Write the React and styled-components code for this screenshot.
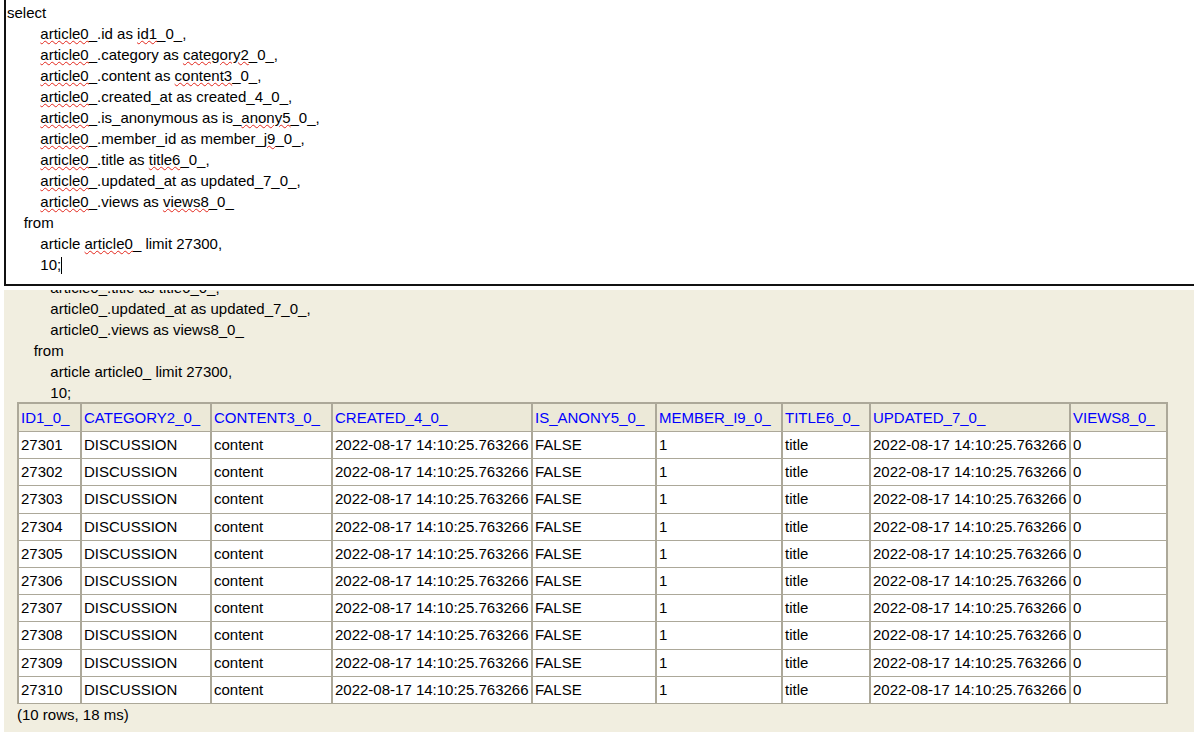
import React from "react";
import styled, { createGlobalStyle } from "styled-components";

const GlobalStyle = createGlobalStyle`
  html, body {
    margin: 0;
    padding: 0;
    overflow: hidden;
    background: #ffffff;
  }
  body {
    font-family: "Liberation Sans", Arial, sans-serif;
    font-size: 15px;
    color: #000;
  }
`;

const Page = styled.div`
  height: 100vh;
  padding-left: 4px;
  display: flex;
  flex-direction: column;
  overflow: hidden;
`;

const Editor = styled.div`
  box-sizing: border-box;
  flex: none;
  height: 288px;
  margin-top: -2px;
  margin-right: -12px;
  border: 2px solid #111;
  background: #fff;
  padding: 2px 1px 0 1px;
  white-space: pre;
  line-height: 21px;
  font-size: 15px;
  overflow: hidden;
`;

const Line = styled.div`
  height: 21px;
`;

const Miss = styled.span`
  text-decoration-line: underline;
  text-decoration-style: wavy;
  text-decoration-color: #e3261b;
  text-decoration-thickness: 1px;
  text-underline-offset: 1px;
`;

const Caret = styled.span`
  display: inline-block;
  width: 1px;
  height: 17px;
  background: #000;
  vertical-align: -4px;
`;

const Results = styled.div`
  flex: 1;
  margin-top: 4px;
  background: #f1eee0;
  padding-left: 13px;
  overflow: hidden;
`;

const ScrolledSql = styled.div`
  margin-top: -160px;
  white-space: pre;
  line-height: 21px;
`;

const ResultTable = styled.table`
  margin-top: -1px;
  border-collapse: collapse;
  table-layout: fixed;
  width: 1149px;
  background: #fff;
  font-size: 15px;
`;

const Th = styled.th`
  background: #ece9d8;
  color: #0000ff;
  font-weight: normal;
  text-align: left;
  padding: 4px 2px;
  line-height: 19px;
  border-style: solid;
  border-color: #aca899;
  border-width: 2px 2px 1px 2px;
  white-space: nowrap;
  overflow: hidden;
`;

const Td = styled.td`
  padding: 4px 2px;
  line-height: 18.2px;
  border-style: solid;
  border-color: #aca899;
  border-width: 1px 2px;
  white-space: nowrap;
  overflow: hidden;
`;

const Summary = styled.div`
  margin-top: 0px;
  line-height: 21px;
`;

const I8 = "        ";
const I4 = "    ";

const editorLines = [
  ["select"],
  [I8, { m: "article0" }, "_.id as ", { m: "id1" }, "_0_,"],
  [I8, { m: "article0" }, "_.category as ", { m: "category2" }, "_0_,"],
  [I8, { m: "article0" }, "_.content as ", { m: "content3" }, "_0_,"],
  [I8, { m: "article0" }, "_.created_at as created_4_0_,"],
  [I8, { m: "article0" }, "_.is_anonymous as is_", { m: "anony5" }, "_0_,"],
  [I8, { m: "article0" }, "_.member_id as member_", { m: "j9" }, "_0_,"],
  [I8, { m: "article0" }, "_.title as ", { m: "title6" }, "_0_,"],
  [I8, { m: "article0" }, "_.updated_at as updated_7_0_,"],
  [I8, { m: "article0" }, "_.views as ", { m: "views8" }, "_0_"],
  [I4, "from"],
  [I8, "article ", { m: "article0" }, "_ limit 27300,"],
  [I8, "10;", { caret: true }],
];

const plainLines = editorLines.map((segs) =>
  segs
    .filter((s) => typeof s === "string" || s.m)
    .map((s) => (typeof s === "string" ? s : s.m))
    .join("")
);

const columns = [
  { name: "ID1_0_", w: 63 },
  { name: "CATEGORY2_0_", w: 130 },
  { name: "CONTENT3_0_", w: 121 },
  { name: "CREATED_4_0_", w: 200 },
  { name: "IS_ANONY5_0_", w: 124 },
  { name: "MEMBER_I9_0_", w: 126 },
  { name: "TITLE6_0_", w: 88 },
  { name: "UPDATED_7_0_", w: 200 },
  { name: "VIEWS8_0_", w: 97 },
];

const TS = "2022-08-17 14:10:25.763266";
const rows = Array.from({ length: 10 }, (_, i) => [
  String(27301 + i),
  "DISCUSSION",
  "content",
  TS,
  "FALSE",
  "1",
  "title",
  TS,
  "0",
]);

function renderSeg(s, k) {
  if (typeof s === "string") return s;
  if (s.caret) return <Caret key={k} />;
  return <Miss key={k}>{s.m}</Miss>;
}

export default function App() {
  return (
    <>
      <GlobalStyle />
      <Page>
        <Editor>
          {editorLines.map((segs, i) => (
            <Line key={i}>{segs.map((s, k) => renderSeg(s, k))}</Line>
          ))}
        </Editor>
        <Results>
          <ScrolledSql>
            {plainLines.map((l, i) => (
              <Line key={i}>{l}</Line>
            ))}
          </ScrolledSql>
          <ResultTable>
            <colgroup>
              {columns.map((c) => (
                <col key={c.name} style={{ width: c.w }} />
              ))}
            </colgroup>
            <thead>
              <tr>
                {columns.map((c) => (
                  <Th key={c.name}>{c.name}</Th>
                ))}
              </tr>
            </thead>
            <tbody>
              {rows.map((r, i) => (
                <tr key={i}>
                  {r.map((v, j) => (
                    <Td key={j}>{v}</Td>
                  ))}
                </tr>
              ))}
            </tbody>
          </ResultTable>
          <Summary>(10 rows, 18 ms)</Summary>
        </Results>
      </Page>
    </>
  );
}
